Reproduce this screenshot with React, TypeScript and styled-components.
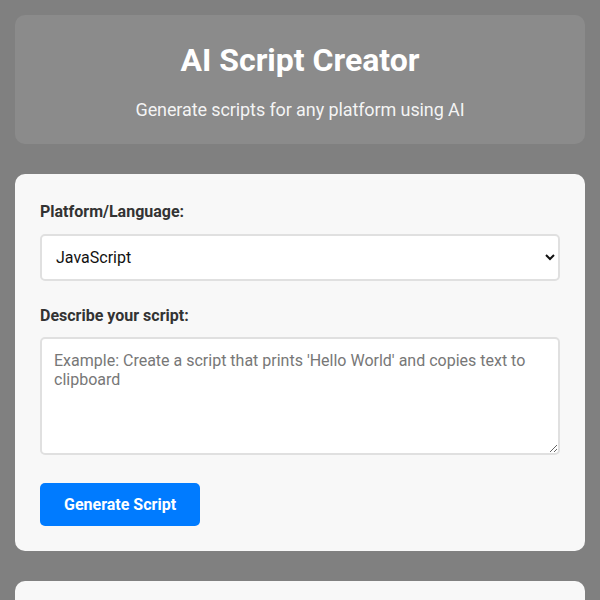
import React, { useState } from "react";
import styled, { createGlobalStyle } from "styled-components";

const GlobalStyle = createGlobalStyle`
  html, body {
    margin: 0;
    padding: 0;
    background: #808080;
  }
  body {
    font-family: Roboto, "Liberation Sans", Arial, sans-serif;
    line-height: 1.6;
    color: #333;
  }
  * { box-sizing: border-box; }
`;

const Page = styled.div`
  padding: 15px;
  display: flex;
  flex-direction: column;
  gap: 30px;
`;

const Header = styled.header`
  background: #8b8b8b;
  border-radius: 10px;
  padding: 20px 20px 19px;
  text-align: center;
  color: #fff;
`;

const Title = styled.h1`
  margin: 0 0 10px;
  font-size: 32px;
  font-weight: 700;
`;

const Subtitle = styled.p`
  margin: 0;
  font-size: 18px;
  letter-spacing: -0.1px;
  color: rgba(255, 255, 255, 0.92);
`;

const Card = styled.section`
  background: #f8f8f8;
  border-radius: 10px;
  padding: 25px;
  min-height: 60px;
`;

const Group = styled.div<{ $mb: number }>`
  margin-bottom: ${(p) => p.$mb}px;
`;

const Label = styled.label`
  display: block;
  font-size: 16px;
  font-weight: 700;
  margin-bottom: 9px;
  color: #333;
`;

const Select = styled.select`
  display: block;
  width: 100%;
  height: 47px;
  padding: 0 10px;
  font-family: Roboto, "Liberation Sans", Arial, sans-serif;
  font-size: 16px;
  color: #111;
  background: #fff;
  border: 2px solid #e0e0e0;
  border-radius: 5px;
`;

const TextArea = styled.textarea`
  display: block;
  width: 100%;
  height: 118px;
  padding: 12px;
  font-family: Roboto, "Liberation Sans", Arial, sans-serif;
  font-size: 16px;
  line-height: 1.2;
  color: #333;
  background: #fff;
  border: 2px solid #e0e0e0;
  border-radius: 5px;
  resize: vertical;
  &::placeholder { color: #777; }
`;

const Button = styled.button`
  display: block;
  padding: 12px 24px;
  font-family: Roboto, "Liberation Sans", Arial, sans-serif;
  font-size: 16px;
  font-weight: 700;
  line-height: normal;
  color: #fff;
  background: #007bff;
  border: none;
  border-radius: 5px;
  cursor: pointer;
`;

export default function App() {
  const [lang, setLang] = useState("JavaScript");
  const [desc, setDesc] = useState("");
  return (
    <>
      <GlobalStyle />
      <Page>
        <Header>
          <Title>AI Script Creator</Title>
          <Subtitle>Generate scripts for any platform using AI</Subtitle>
        </Header>
        <Card>
          <Group $mb={22}>
            <Label htmlFor="lang">Platform/Language:</Label>
            <Select id="lang" value={lang} onChange={(e) => setLang(e.target.value)}>
              <option>JavaScript</option>
              <option>Python</option>
              <option>Bash</option>
              <option>PowerShell</option>
            </Select>
          </Group>
          <Group $mb={28}>
            <Label htmlFor="desc">Describe your script:</Label>
            <TextArea
              id="desc"
              value={desc}
              onChange={(e) => setDesc(e.target.value)}
              placeholder="Example: Create a script that prints 'Hello World' and copies text to clipboard"
            />
          </Group>
          <Button>Generate Script</Button>
        </Card>
        <Card />
      </Page>
    </>
  );
}
